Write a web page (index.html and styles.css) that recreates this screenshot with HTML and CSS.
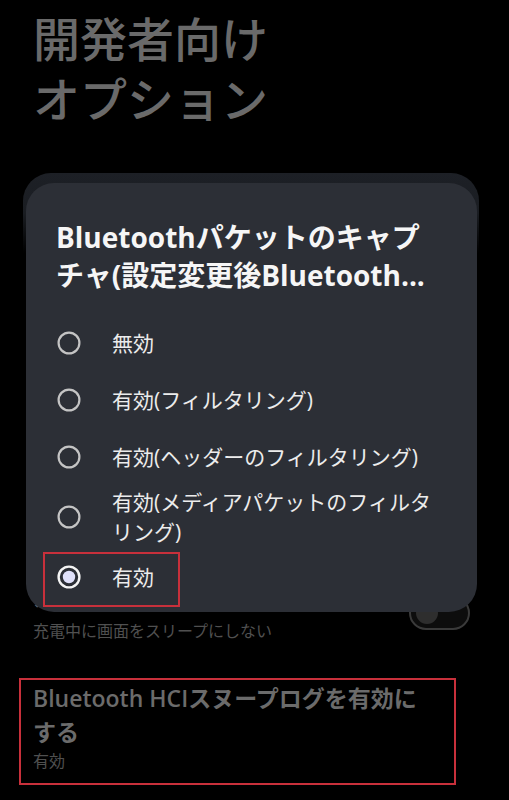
FILE: index.html
```html
<!DOCTYPE html>
<html lang="ja">
<head>
<meta charset="utf-8">
<title>開発者向けオプション</title>
<link rel="stylesheet" href="styles.css">
</head>
<body>
<div class="page">
  <h1 class="page-title">開発者向け<br>オプション</h1>
  <div class="group-card"></div>
  <div class="setting setting-sleep">
    <div class="setting-text">
      <div class="setting-title sleep-title">スリープモードにしない</div>
      <div class="setting-summary">充電中に画面をスリープにしない</div>
    </div>
    <div class="switch"><span class="thumb"></span></div>
  </div>
  <div class="setting setting-hci">
    <div class="setting-text">
      <div class="setting-title hci-title">Bluetooth HCIスヌープログを有効にする</div>
      <div class="setting-summary">有効</div>
    </div>
  </div>
</div>

<div class="dialog">
  <div class="dialog-title">Bluetoothパケットのキャプチャ(設定変更後Bluetooth...</div>
  <div class="options">
    <div class="option">
      <svg class="radio" viewBox="0 0 24 24"><circle cx="12" cy="12" r="10.4" fill="none" stroke="#c4c4c4" stroke-width="2.2"/></svg>
      <span class="label">無効</span>
    </div>
    <div class="option">
      <svg class="radio" viewBox="0 0 24 24"><circle cx="12" cy="12" r="10.4" fill="none" stroke="#c4c4c4" stroke-width="2.2"/></svg>
      <span class="label">有効(フィルタリング)</span>
    </div>
    <div class="option">
      <svg class="radio" viewBox="0 0 24 24"><circle cx="12" cy="12" r="10.4" fill="none" stroke="#c4c4c4" stroke-width="2.2"/></svg>
      <span class="label">有効(ヘッダーのフィルタリング)</span>
    </div>
    <div class="option">
      <svg class="radio" viewBox="0 0 24 24"><circle cx="12" cy="12" r="10.4" fill="none" stroke="#c4c4c4" stroke-width="2.2"/></svg>
      <span class="label">有効(メディアパケットのフィルタリング)</span>
    </div>
    <div class="option">
      <svg class="radio" viewBox="0 0 24 24"><circle cx="12" cy="12" r="10.4" fill="none" stroke="#f4f4f4" stroke-width="2.4"/><circle cx="12" cy="12" r="6.2" fill="#e0e1fa"/></svg>
      <span class="label">有効</span>
    </div>
  </div>
</div>

<div class="mark mark-option"></div>
<div class="mark mark-setting"></div>
</body>
</html>
```

FILE: styles.css
```css
html, body {
  margin: 0;
  padding: 0;
  background: #000;
}

body {
  width: 509px;
  height: 800px;
  overflow: hidden;
  position: relative;
  font-family: "Open Sans", "Noto Sans CJK JP", sans-serif;
}

.page {
  display: flex;
  flex-direction: column;
}

.page-title {
  margin: 0;
  padding: 7px 0 0 33px;
  font-family: "Noto Sans CJK JP", sans-serif;
  font-weight: 500;
  font-size: 47px;
  line-height: 60px;
  color: #6a6a6a;
}

.group-card {
  margin: 46px 30px 0 23px;
  height: 412px;
  border-radius: 28px;
  background: linear-gradient(#1d2026 0, #1a1d22 40px, rgba(0,0,0,0) 80px);
}

.setting {
  display: flex;
  align-items: center;
  padding: 0 39px 0 33px;
}

.setting-text {
  flex: 1;
}

.setting-title {
  font-weight: 600;
  font-size: 23px;
  line-height: 34px;
  color: #6b6b6b;
}

.sleep-title {
  line-height: 24px;
  padding-bottom: 10px;
}

.hci-title {
  max-width: 396px;
}

.setting-summary {
  font-family: "Noto Sans CJK JP", sans-serif;
  font-size: 16px;
  line-height: 22px;
  color: #505050;
}

.setting-hci {
  margin-top: 40px;
}

.switch {
  width: 52px;
  height: 30px;
  border: 2px solid #3a3a3a;
  border-radius: 18px;
  background: #0d0d0d;
  display: flex;
  align-items: center;
  padding-left: 5px;
  box-sizing: content-box;
}

.thumb {
  width: 22px;
  height: 22px;
  border-radius: 50%;
  background: #2e2e2e;
}

.dialog {
  position: absolute;
  left: 26px;
  top: 183px;
  width: 451px;
  box-sizing: border-box;
  padding: 35px 30px 7px 30px;
  background: #2c2f36;
  border-radius: 28px;
}

.dialog-title {
  max-width: 380px;
  font-weight: 700;
  font-size: 28px;
  line-height: 38px;
  color: #f6f6f6;
  margin-bottom: 20px;
}

.options {
  display: flex;
  flex-direction: column;
}

.option {
  display: flex;
  align-items: center;
  min-height: 57px;
  padding: 1.5px 0;
  box-sizing: border-box;
}

.radio {
  width: 24px;
  height: 24px;
  flex: none;
  margin-left: 0.5px;
  margin-right: 31.5px;
}

.label {
  font-size: 21px;
  line-height: 30px;
  color: #ececec;
  max-width: 336px;
}

.mark {
  position: absolute;
  border: 2px solid #c8303b;
  box-sizing: border-box;
}

.mark-option {
  left: 43px;
  top: 552px;
  width: 137px;
  height: 55px;
}

.mark-setting {
  left: 19px;
  top: 678px;
  width: 437px;
  height: 107px;
}
```
